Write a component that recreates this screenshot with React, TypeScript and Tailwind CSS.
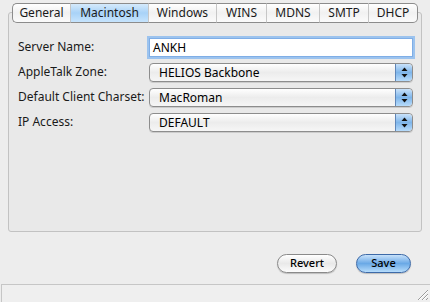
import React from "react";

const TABS = [
  { label: "General", w: "w-[58px]" },
  { label: "Macintosh", w: "w-[78px]", active: true },
  { label: "Windows", w: "w-[68px]" },
  { label: "WINS", w: "w-[50px]" },
  { label: "MDNS", w: "w-[53px]" },
  { label: "SMTP", w: "w-[49px]" },
  { label: "DHCP", w: "w-[50px]" },
];

const POPUPS = [
  { label: "AppleTalk Zone:", value: "HELIOS Backbone" },
  { label: "Default Client Charset:", value: "MacRoman" },
  { label: "IP Access:", value: "DEFAULT" },
];

function Stepper() {
  return (
    <div className="w-[17px] h-full flex items-center justify-center rounded-r-[4px] border-l border-[#5f86b8] bg-gradient-to-b from-[#c9e2fa] via-[#7eb5ea] to-[#b6dbfb]">
      <svg width="7" height="11" viewBox="0 0 7 11">
        <path d="M3.5 0.5 L6.5 4 L0.5 4 Z" fill="#111" />
        <path d="M3.5 10.5 L6.5 7 L0.5 7 Z" fill="#111" />
      </svg>
    </div>
  );
}

function Popup({ value }: { value: string }) {
  return (
    <div className="w-[264px] h-[19px] flex items-stretch rounded-[4px] border border-[#8d8d8d] bg-gradient-to-b from-[#ffffff] via-[#ececec] to-[#f6f6f6] shadow-[0_1px_0_rgba(0,0,0,0.12)]">
      <span className="flex-1 pl-[9px] leading-[17px] text-[12px] text-black">{value}</span>
      <Stepper />
    </div>
  );
}

export default function App() {
  return (
    <div
      className="w-[430px] h-[302px] bg-[#ededed] flex flex-col overflow-hidden"
      style={{ fontFamily: '"Lucida Grande", "Noto Sans", sans-serif' }}
    >
      {/* Tab view */}
      <div className="pt-[3px] px-[8px]">
        <div className="relative z-10 flex pl-[4px]">
          {TABS.map((t, i) => (
            <div
              key={t.label}
              className={`${t.w} h-[20px] flex items-center justify-center whitespace-nowrap text-[12px] text-[#1a1a1a] border-y border-[#8c8c8c] ${
                i === 0 ? "border-l rounded-l-[5px]" : "border-l border-l-[#c6c6c6]"
              } ${i === TABS.length - 1 ? "border-r rounded-r-[5px]" : ""} ${
                t.active
                  ? "bg-gradient-to-b from-[#d5eafc] via-[#a8d2f7] to-[#c6e4fd]"
                  : "bg-gradient-to-b from-[#ffffff] via-[#f1f1f1] to-[#fbfbfb]"
              }`}
            >
              {t.label}
            </div>
          ))}
        </div>
        <div className="-mt-[11px] h-[220px] border border-[#c2c2c2] rounded-[3px] bg-[#e9e9e9] pt-[24px] pl-[9px]">
          <div className="flex items-center h-[20px]">
            <span className="w-[131px] whitespace-nowrap text-[12px] text-[#1a1a1a]">Server Name:</span>
            <div className="w-[264px] h-[19px] border border-[#7faee6] ring-2 ring-[#9cc3ee] bg-white pl-[3px] leading-[17px] text-[12px] text-black">
              ANKH
            </div>
          </div>
          {POPUPS.map((p) => (
            <div key={p.label} className="flex items-center h-[20px] mt-[5px]">
              <span className="w-[131px] whitespace-nowrap text-[12px] text-[#1a1a1a]">{p.label}</span>
              <Popup value={p.value} />
            </div>
          ))}
        </div>
      </div>

      {/* Buttons */}
      <div className="flex justify-end gap-[19px] pr-[19px] mt-[22px]">
        <button className="w-[60px] h-[19px] rounded-full border border-[#8a8a8a] bg-gradient-to-b from-[#ffffff] via-[#e9e9e9] to-[#fcfcfc] text-[11px] font-medium text-black shadow-[0_1px_1px_rgba(0,0,0,0.2)]">
          Revert
        </button>
        <button className="w-[55px] h-[19px] rounded-full border border-[#3d6aa8] bg-gradient-to-b from-[#c7e1fa] via-[#6aa9e6] to-[#b6dcfb] text-[11px] font-medium text-black shadow-[0_1px_1px_rgba(0,0,0,0.2)]">
          Save
        </button>
      </div>

      {/* Status bar */}
      <div className="mt-auto h-[18px] ml-[1px] border-t border-l border-[#c6c6c6] bg-[#efefef] flex justify-end items-end">
        <svg width="14" height="14" viewBox="0 0 14 14" className="mb-[1px] mr-[1px]">
          <path d="M13 3 L3 13 M13 7 L7 13 M13 11 L11 13" stroke="#9a9a9a" strokeWidth="1" />
          <path d="M13 4 L4 13 M13 8 L8 13" stroke="#ffffff" strokeWidth="1" />
        </svg>
      </div>
    </div>
  );
}
